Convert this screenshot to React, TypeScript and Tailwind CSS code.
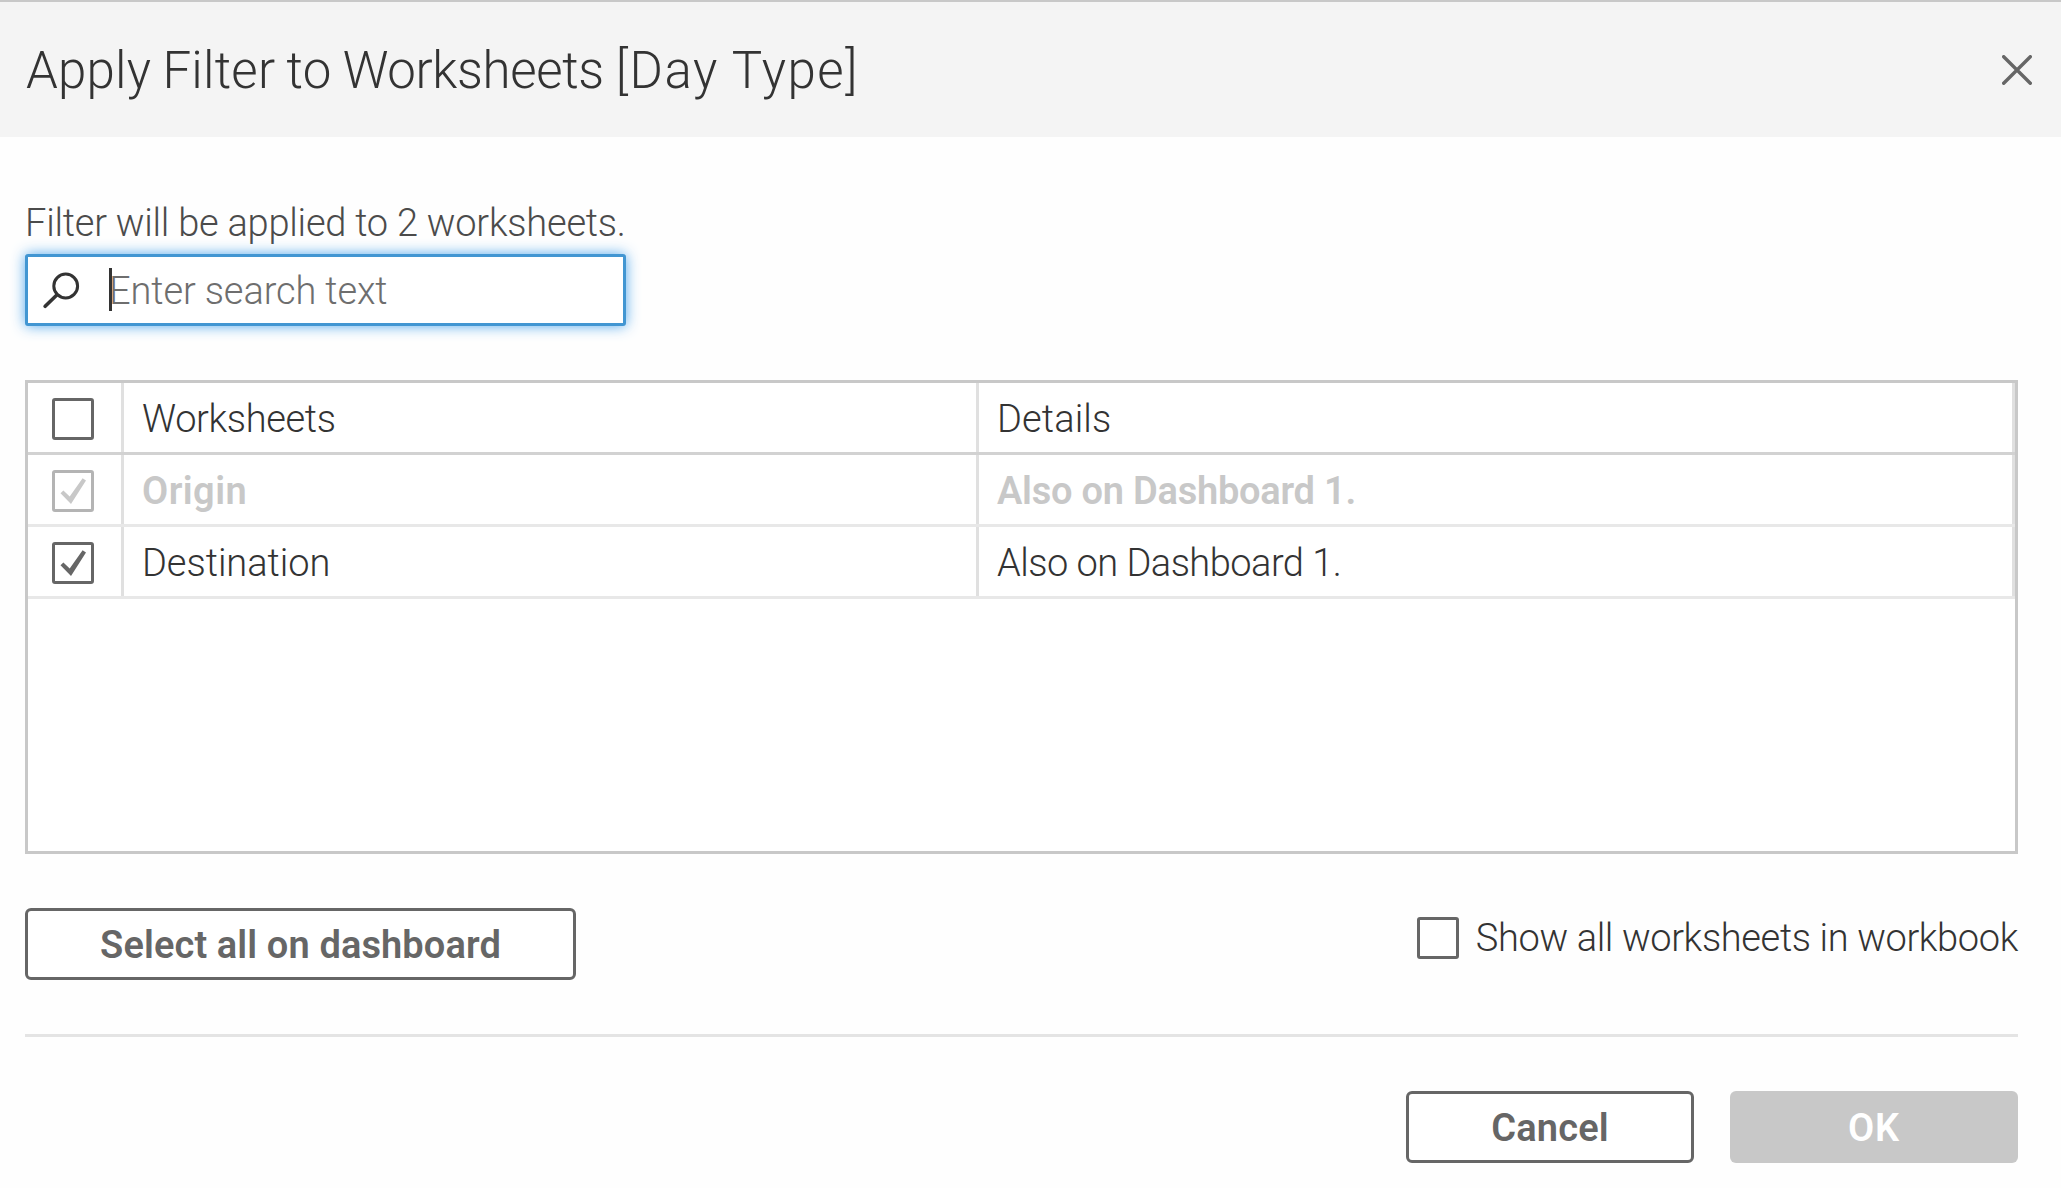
import React from 'react';
import clsx from 'clsx';

function Checkbox({ checked = false, disabled = false }: { checked?: boolean; disabled?: boolean }) {
  return (
    <span
      role="checkbox"
      aria-checked={checked}
      className={clsx(
        'block size-[42px] shrink-0 rounded-[3px] border-[3px] bg-white',
        disabled ? 'border-[#b4b4b4] text-[#c8c8c8]' : 'border-[#666666] text-[#666666]',
      )}
    >
      {checked && (
        <svg viewBox="3 3 36 36" className="size-9" fill="currentColor">
          <path d="M8.5 23.2 11.4 20.6 17.7 26.6 30.6 8.2 34 10.4 19 34Z" />
        </svg>
      )}
    </span>
  );
}

type RowProps = {
  checked?: boolean;
  disabled?: boolean;
  header?: boolean;
  name: string;
  nameClass: string;
  details: string;
  detailsClass: string;
};

function Row({ checked, disabled, header, name, nameClass, details, detailsClass }: RowProps) {
  const line = header ? 'border-b-[#d2d2d2]' : 'border-b-[#e8e8e8]';
  return (
    <div
      className={clsx(
        'flex h-[72px] border-b-[3px]',
        line,
        disabled ? 'font-semibold text-[#c8c8c8]' : 'font-light text-[#333333]',
      )}
    >
      <div className="flex w-24 shrink-0 items-start border-r-[3px] border-[#e0e0e0] pl-6 pt-[15px]">
        <Checkbox checked={checked} disabled={disabled} />
      </div>
      <div className="flex w-[855px] shrink-0 items-start border-r-[3px] border-[#e0e0e0] pl-[18px] pt-[14px]">
        <span className={nameClass}>{name}</span>
      </div>
      <div className="flex flex-1 items-start border-r-[3px] border-[#e0e0e0] pl-[18px] pt-[14px]">
        <span className={detailsClass}>{details}</span>
      </div>
    </div>
  );
}

export default function App() {
  return (
    <div className="flex h-[1188px] w-[2061px] flex-col overflow-hidden whitespace-nowrap bg-[#fefefe] font-['Roboto',sans-serif] text-[38px] leading-[44px] text-[#333333]">
      <header className="flex h-[137px] shrink-0 items-center justify-between border-t-2 border-[#c8c8c8] bg-[#f4f4f4] pl-[26px] pr-[29px]">
        <h1 className="pt-[2px] text-[51px] font-light leading-[60px] tracking-[0.21px]">
          <span className="[word-spacing:-1.4px]">Apply Filter to </span>
          <span className="tracking-[-0.35px]">Worksheets </span>
          <span className="tracking-[1.5px]">[Day Type]</span>
        </h1>
        <button aria-label="Close" className="text-[#666666]">
          <svg viewBox="0 0 30 30" className="size-[30px]" fill="none" stroke="currentColor" strokeWidth="3.4" strokeLinecap="round">
            <path d="M1.7 1.7 28.3 28.3M28.3 1.7 1.7 28.3" />
          </svg>
        </button>
      </header>

      <main className="flex flex-1 flex-col pl-[25px] pr-[43px] pt-16">
        <p className="font-light tracking-[-0.23px] text-[#4b4b4b]">Filter will be applied to 2 worksheets.</p>

        <div className="mt-[9px] flex h-[72px] w-[601px] shrink-0 items-center rounded-[3px] border-[3px] border-[#4296d2] bg-white pl-[15px] shadow-[0_0_14px_rgba(66,160,235,0.9)]">
          <svg viewBox="0 0 37 37" className="size-[37px] shrink-0 text-[#333333]" fill="none" stroke="currentColor" strokeLinecap="round">
            <circle cx="22.7" cy="14" r="11.9" strokeWidth="3" />
            <path d="M13.8 23 2.2 34.3" strokeWidth="3.6" />
          </svg>
          <div className="relative ml-[29px] flex items-center pt-[2px]">
            <span className="font-light tracking-[-0.12px] text-[#6e6e6e]">Enter search text</span>
            <span className="absolute left-0 top-px h-[43px] w-[3px] bg-[#333333]" />
          </div>
        </div>

        <section className="mt-[54px] h-[474px] shrink-0 border-[3px] border-[#c8c8c8] bg-white">
          <Row header name="Worksheets" nameClass="tracking-[-0.35px]" details="Details" detailsClass="tracking-[0.13px]" />
          <Row
            checked
            disabled
            name="Origin"
            nameClass="tracking-[0.45px]"
            details="Also on Dashboard 1."
            detailsClass="tracking-[-0.24px]"
          />
          <Row
            checked
            name="Destination"
            nameClass="tracking-[-0.04px]"
            details="Also on Dashboard 1."
            detailsClass="tracking-[-0.52px]"
          />
        </section>

        <div className="mt-[54px] flex h-[72px] shrink-0 items-start justify-between">
          <button className="h-[72px] w-[551px] rounded-md border-[3px] border-[#666666] bg-white pt-[2px] font-semibold tracking-[0.11px] text-[#666666]">
            Select all on dashboard
          </button>
          <label className="mt-[9px] flex items-start gap-[17px]">
            <Checkbox />
            <span className="-mt-px font-light tracking-[-0.36px]">Show all worksheets in workbook</span>
          </label>
        </div>

        <hr className="mt-[54px] border-t-[3px] border-[#e4e4e4]" />

        <footer className="mt-[54px] flex justify-end gap-9">
          <button className="h-[72px] w-72 rounded-md border-[3px] border-[#666666] bg-white pt-[2px] font-semibold tracking-[0.17px] text-[#666666]">
            Cancel
          </button>
          <button className="h-[72px] w-72 rounded-md bg-[#c8c8c8] pt-[2px] font-semibold tracking-[0.8px] text-white">
            OK
          </button>
        </footer>
      </main>
    </div>
  );
}
